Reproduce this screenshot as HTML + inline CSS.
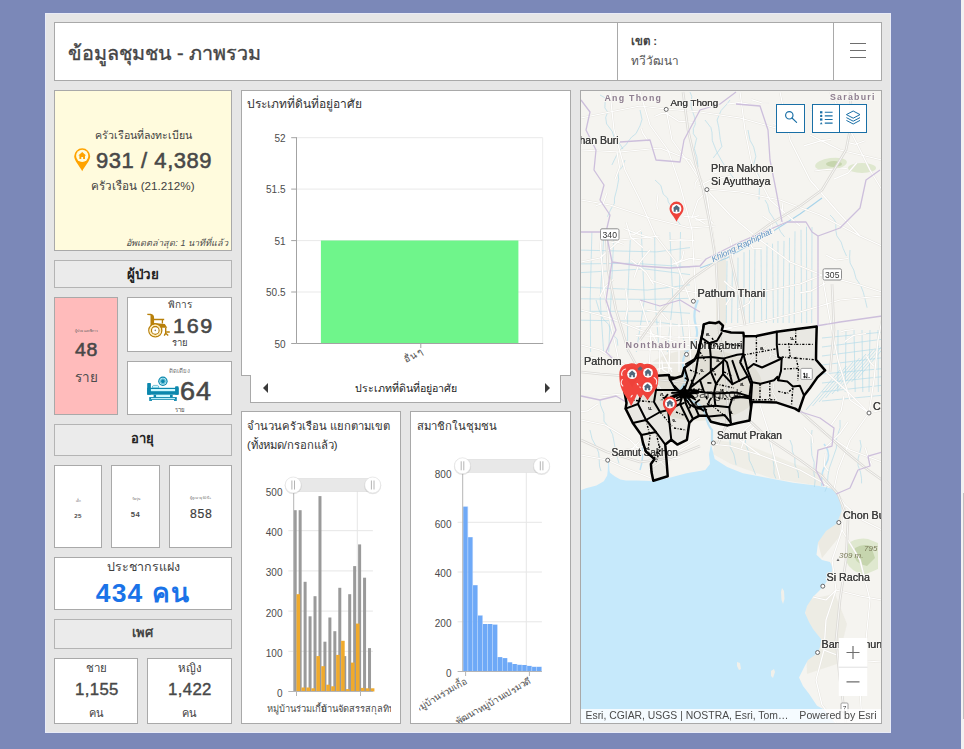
<!DOCTYPE html>
<html lang="th">
<head>
<meta charset="utf-8">
<title>ข้อมูลชุมชน - ภาพรวม</title>
<style>
*{box-sizing:border-box;margin:0;padding:0}
html,body{width:964px;height:749px;overflow:hidden}
body{background:#7b88b8;font-family:"Liberation Sans",sans-serif;color:#4c4c4c;position:relative}
#app{position:absolute;left:45px;top:13px;width:846px;height:720px;background:#e6e6e6;box-shadow:inset 0 0 0 1px rgba(232,236,252,.75)}
.p{position:absolute;background:#fff;border:1px solid #a9a9a9}
.hd{position:absolute;background:#ebebeb;border:1px solid #b4b4b4;text-align:center;font-weight:bold;color:#333;font-size:13px}
.c{text-align:center}
.abs{position:absolute}
.num{font-weight:bold;color:#4c4c4c}
.med{color:#484848;-webkit-text-stroke:.4px #484848;white-space:nowrap}
.big{color:#484848;-webkit-text-stroke:.55px #484848}
.ax{fill:#4c4c4c;font-family:"Liberation Sans",sans-serif}
svg{display:block;position:absolute;overflow:hidden}
</style>
</head>
<body>
<div id="app">

<!-- ===== header ===== -->
<div class="p" id="hdr" style="left:9px;top:9px;width:828px;height:59px">
  <div class="abs" style="left:12.500px;top:13.500px;font-size:19.8px;color:#444;-webkit-text-stroke:.35px #444;white-space:nowrap">ข้อมูลชุมชน - ภาพรวม</div>
  <div class="abs" style="left:562px;top:0;width:1px;height:57px;background:#a9a9a9"></div>
  <div class="abs" style="left:778px;top:0;width:1px;height:57px;background:#a9a9a9"></div>
  <div class="abs" style="left:576px;top:8.600px;font-size:11.5px;font-weight:bold;color:#444;white-space:nowrap">เขต :</div>
  <div class="abs" style="left:576px;top:27.600px;font-size:11.800px;color:#555;white-space:nowrap">ทวีวัฒนา</div>
  <div class="abs" style="left:794.500px;top:20.200px;width:16px;height:1.3px;background:#6e6e6e"></div>
  <div class="abs" style="left:794.500px;top:27.200px;width:16px;height:1.3px;background:#6e6e6e"></div>
  <div class="abs" style="left:794.500px;top:34px;width:16px;height:1.3px;background:#6e6e6e"></div>
</div>

<!-- ===== left column ===== -->
<div class="p" id="ind1" style="left:9px;top:77px;width:178px;height:161px;background:#fffbdd">
  <div class="abs c" style="left:0;top:36px;width:176px;font-size:10.6px;color:#3f3f3f;white-space:nowrap">ครัวเรือนที่ลงทะเบียน</div>
  <svg style="left:19px;top:57px" width="17" height="24" viewBox="0 0 17 24"><path d="M8.2.3a8 8 0 0 1 8 8c0 4.6-5.6 10-8 15-2.400-5-8-10.400-8-15a8 8 0 0 1 8-8z" fill="#ffa300"/><circle cx="8.200" cy="7.900" r="6.100" fill="#fffbdd"/><path d="M8.200 4l3.900 3.400h-1.100v3.700H9.100V8.900H7.300v2.200H5.400V7.400H4.300z" fill="#ffa300"/></svg>
  <div class="abs big" style="left:41px;top:57px;font-size:22px;letter-spacing:.55px;white-space:nowrap">931 / 4,389</div>
  <div class="abs c" style="left:0;top:86px;width:176px;font-size:11.7px;color:#3f3f3f;white-space:nowrap">ครัวเรือน (21.212%)</div>
  <div class="abs" style="right:3px;bottom:0px;font-size:9.100px;font-style:italic;color:#4c4c4c;white-space:nowrap">อัพเดตล่าสุด: 1 นาทีที่แล้ว</div>
</div>

<div class="hd" style="left:9px;top:247px;width:178px;height:28px"><div class="abs c" id="h1" style="left:-.3px;top:2.500px;width:176px;font-size:13.400px;color:#222">ผู้ป่วย</div></div>

<div class="p" id="pink" style="left:9px;top:284px;width:64px;height:118px;background:#ffbbbb">
  <div class="abs c" style="left:0;top:30px;width:63px;font-size:3.500px;color:#666;white-space:nowrap">ผู้ป่วย และพิการ</div>
  <div class="abs big" id="n48" style="left:20.300px;top:42.300px;font-size:18.200px;letter-spacing:.6px;transform-origin:0 0;transform:scaleX(1.07);white-space:nowrap">48</div>
  <div class="abs c" id="t_rai0" style="left:0px;top:68.200px;width:62px;font-size:13.500px;color:#4c4c4c">ราย</div>
</div>
<div class="p" id="dis" style="left:82px;top:284px;width:105px;height:55px">
  <div class="abs c" id="t_dis" style="left:0;top:-1px;width:103px;font-size:10px;color:#3f3f3f">พิการ</div>
  <svg style="left:16px;top:9.500px" width="32" height="32" viewBox="0 0 32 32">
    <g fill="#b8800a" stroke="none">
      <path d="M3.300 5.700H6.600Q10.100 6 10.100 10V17H6.500V7.200Q5.600 7.100 3.300 7.100Z"/>
      <path d="M10 15.100L20.800 15.900L23.300 19.800H16.800Q14.500 16.600 10 16.600Z"/>
    </g>
    <g fill="none" stroke="#b8800a" stroke-width="1.300">
      <path d="M10 11.500H20.200M18.400 11.500V15.600"/>
      <circle cx="11.300" cy="22.400" r="6.500"/>
      <circle cx="11.300" cy="22.400" r="3.900"/>
      <path d="M21.700 19.800V25.200L20.200 27.600M21.700 25.200L24.200 27.600M22.500 24H25.800" stroke-width="1.400"/>
    </g>
    <circle cx="11.300" cy="22.400" r="5.200" fill="none" stroke="#ffeab0" stroke-width="1.200"/>
    <circle cx="11.300" cy="22.400" r=".8" fill="#8a8270"/>
  </svg>
  <div class="abs big" id="n169" style="left:45px;top:17.200px;font-size:19.600px;letter-spacing:1.5px;transform-origin:0 0;transform:scaleX(1.1)">169</div>
  <div class="abs c" id="t_rai1" style="left:0;top:37px;width:103px;font-size:9.5px;color:#3f3f3f">ราย</div>
</div>
<div class="p" id="bed" style="left:82px;top:348px;width:105px;height:54px">
  <div class="abs c" id="t_bed" style="left:0;top:4px;width:103px;font-size:6.1px;color:#777">ติดเตียง</div>
  <svg style="left:16px;top:10px" width="40" height="34" viewBox="0 0 40 34">
    <g fill="#0b87ad">
      <rect x="3.200" y="11.100" width="3.700" height="11.600" rx=".6"/>
      <rect x="31.100" y="14.300" width="3.500" height="8.400" rx=".8"/>
      <rect x="3.200" y="15.800" width="31.400" height="6.900"/>
      <rect x="9.600" y="22.700" width="2.700" height="2.600"/>
      <rect x="26" y="22.700" width="2.700" height="2.600"/>
      <rect x="5.200" y="25.100" width="27.600" height="2.700"/>
      <rect x="5.200" y="27.600" width="2.800" height="1.300"/>
      <rect x="30" y="27.600" width="2.800" height="1.300"/>
      <circle cx="18.900" cy="9.300" r="4.700"/>
    </g>
    <g fill="#cdf8ff">
      <rect x="6.900" y="17" width="24.200" height="2.200"/>
      <rect x="12.300" y="23" width="13.700" height="2"/>
      <rect x="7" y="26" width="24" height=".9"/>
      <path d="M8.300 15.800Q8.300 13.400 9.600 13.400H13.600Q14.800 13.400 14.800 15.800Z" stroke="#0b87ad" stroke-width=".5"/>
      <circle cx="18.900" cy="9.300" r="3.500"/>
    </g>
    <circle cx="18.900" cy="9.300" r="2.700" fill="#0b87ad"/>
    <circle cx="18.900" cy="9.300" r="2.300" fill="none" stroke="#cdf8ff" stroke-width=".5"/>
  </svg>
  <div class="abs big" id="n64" style="left:52.4px;top:15px;font-size:25px;letter-spacing:.8px;transform-origin:0 0;transform:scaleX(1.08)">64</div>
  <div class="abs c" id="t_rai2" style="left:0;top:43px;width:103px;font-size:6px;color:#444">ราย</div>
</div>

<div class="hd" style="left:9px;top:411px;width:178px;height:32px"><div class="abs c" id="h2" style="left:-.5px;top:2.800px;width:176px;font-size:13px;color:#222">อายุ</div></div>

<div class="p" style="left:9px;top:452px;width:48px;height:83px">
  <div class="abs c" style="left:0;top:32.500px;width:46px;font-size:3px;color:#666">เด็ก</div>
  <div class="abs c num" id="n25" style="left:0;top:46.200px;width:46px;font-size:6.200px;letter-spacing:.3px">25</div>
</div>
<div class="p" style="left:66px;top:452px;width:49px;height:83px">
  <div class="abs c" style="left:0;top:30px;width:47px;font-size:3.400px;color:#666">วัยรุ่น</div>
  <div class="abs c num" id="n54" style="left:0;top:44px;width:47px;font-size:7.700px;letter-spacing:.5px">54</div>
</div>
<div class="p" style="left:124px;top:452px;width:63px;height:83px">
  <div class="abs c" style="left:0;top:29px;width:61px;font-size:3.300px;color:#666;white-space:nowrap">ผู้สูงอายุ 60 ปี+</div>
  <div class="abs" id="n858" style="left:20px;top:41.200px;font-size:12.200px;letter-spacing:.75px;color:#3c3c3c;-webkit-text-stroke:.2px #3c3c3c">858</div>
</div>

<div class="p" style="left:9px;top:544px;width:178px;height:53px">
  <div class="abs c" id="t_pop" style="left:0;top:-1px;width:176px;font-size:12.500px;color:#3f3f3f">ประชากรแฝง</div>
  <div class="abs c" id="n434" style="left:0;top:14.300px;width:176px;font-size:26.500px;font-weight:bold;color:#1a73e8;letter-spacing:1.150px;white-space:nowrap">434 คน</div>
</div>

<div class="hd" style="left:9px;top:606px;width:178px;height:30px"><div class="abs c" id="h3" style="left:-.8px;top:2px;width:176px;font-size:13px;color:#444">เพศ</div></div>

<div class="p" style="left:9px;top:645px;width:84px;height:66px">
  <div class="abs c" id="t_m" style="left:0;top:0px;width:82px;font-size:11.500px;color:#3f3f3f">ชาย</div>
  <div class="abs med" id="n1155" style="left:20px;top:21px;font-size:16.800px;letter-spacing:.35px">1,155</div>
  <div class="abs c" id="t_k1" style="left:0;top:44.500px;width:82px;font-size:11px;color:#3f3f3f">คน</div>
</div>
<div class="p" style="left:102px;top:645px;width:85px;height:66px">
  <div class="abs c" id="t_f" style="left:0;top:0px;width:83px;font-size:11.500px;color:#3f3f3f">หญิง</div>
  <div class="abs med" id="n1422" style="left:20px;top:21px;font-size:16.800px;letter-spacing:.35px">1,422</div>
  <div class="abs c" id="t_k2" style="left:0;top:44.500px;width:83px;font-size:11px;color:#3f3f3f">คน</div>
</div>

<!-- ===== middle column ===== -->
<div class="p" id="ch1" style="left:196px;top:77px;width:330px;height:286px">
  <div class="abs" id="t_c1" style="left:5px;top:3px;font-size:12px;color:#333;white-space:nowrap">ประเภทที่ดินที่อยู่อาศัย</div>
  <svg width="329" height="284" style="left:0;top:0"><g transform="translate(-242,-91)"><path d="M296.5 137.7H542.7" stroke="#e9e9e9" stroke-width="1"/><path d="M296.5 189.1H542.7" stroke="#e9e9e9" stroke-width="1"/><path d="M296.5 240.6H542.7" stroke="#e9e9e9" stroke-width="1"/><path d="M296.5 292.0H542.7" stroke="#e9e9e9" stroke-width="1"/><path d="M542.7 137.700V343.500" stroke="#ececec" stroke-width="1"/><rect x="320.900" y="240.500" width="197.500" height="103" fill="#6ff58b"/><path d="M296.500 137.200V343.500H543.200" fill="none" stroke="#a3a3a3" stroke-width="1"/><path d="M291.200 137.7H296.500" stroke="#a3a3a3" stroke-width="1"/><text class="ax" x="285.500" y="141.9" text-anchor="end" font-size="10">52</text><path d="M291.200 189.1H296.500" stroke="#a3a3a3" stroke-width="1"/><text class="ax" x="285.500" y="193.3" text-anchor="end" font-size="10">51.5</text><path d="M291.200 240.6H296.500" stroke="#a3a3a3" stroke-width="1"/><text class="ax" x="285.500" y="244.8" text-anchor="end" font-size="10">51</text><path d="M291.200 292.0H296.500" stroke="#a3a3a3" stroke-width="1"/><text class="ax" x="285.500" y="296.2" text-anchor="end" font-size="10">50.5</text><path d="M291.200 343.5H296.500" stroke="#a3a3a3" stroke-width="1"/><text class="ax" x="285.500" y="347.7" text-anchor="end" font-size="10">50</text><path d="M420.800 343.500V348" stroke="#a3a3a3" stroke-width="1"/><text class="ax" x="422" y="350.700" text-anchor="end" font-size="9.500" transform="rotate(-30 422 350.700)" dy="3">อื่น ๆ</text></g></svg>
</div>
<div class="p" id="tabs" style="left:205px;top:362px;width:311px;height:28px;border-top:none">
  <div class="abs" style="left:12px;top:8px;width:0;height:0;border:5px solid transparent;border-right:5.500px solid #3a3a3a;border-left:none"></div>
  <div class="abs c" id="t_tab" style="left:0;top:5px;width:309px;font-size:10.600px;color:#222;white-space:nowrap">ประเภทที่ดินที่อยู่อาศัย</div>
  <div class="abs" style="right:10px;top:8px;width:0;height:0;border:5px solid transparent;border-left:5.500px solid #3a3a3a;border-right:none"></div>
</div>
<div class="p" id="ch2" style="left:196px;top:398px;width:160px;height:313px;overflow:hidden">
  <div class="abs" id="t_c2" style="left:5px;top:5.200px;font-size:11.250px;line-height:18.800px;color:#333;white-space:nowrap">จำนวนครัวเรือน แยกตามเขต<br>(ทั้งหมด/กรอกแล้ว)</div>
  <svg width="159" height="311" style="left:0;top:0"><g transform="translate(-242,-412)"><path d="M288.300 651.3H372.900" stroke="#e6e6e6" stroke-width="1"/><path d="M288.300 611.1H372.900" stroke="#e6e6e6" stroke-width="1"/><path d="M288.300 570.9H372.900" stroke="#e6e6e6" stroke-width="1"/><path d="M288.300 530.7H372.900" stroke="#e6e6e6" stroke-width="1"/><path d="M357.300 490.600V691.500" stroke="#e6e6e6" stroke-width="1"/><rect x="293.70" y="510.2" width="3" height="181.3" fill="#9a9a9a"/><rect x="298.65" y="510.2" width="3" height="181.3" fill="#9a9a9a"/><rect x="303.61" y="581.8" width="3" height="109.7" fill="#9a9a9a"/><rect x="308.56" y="616.3" width="3" height="75.2" fill="#9a9a9a"/><rect x="313.52" y="596.2" width="3" height="95.3" fill="#9a9a9a"/><rect x="318.47" y="496.1" width="3" height="195.4" fill="#9a9a9a"/><rect x="323.43" y="641.7" width="3" height="49.8" fill="#9a9a9a"/><rect x="328.38" y="617.5" width="3" height="74.0" fill="#9a9a9a"/><rect x="333.34" y="631.2" width="3" height="60.3" fill="#9a9a9a"/><rect x="338.29" y="587.8" width="3" height="103.7" fill="#9a9a9a"/><rect x="343.25" y="656.1" width="3" height="35.4" fill="#9a9a9a"/><rect x="348.20" y="594.2" width="3" height="97.3" fill="#9a9a9a"/><rect x="353.16" y="566.1" width="3" height="125.4" fill="#9a9a9a"/><rect x="358.12" y="544.4" width="3" height="147.1" fill="#9a9a9a"/><rect x="363.07" y="577.7" width="3" height="113.8" fill="#9a9a9a"/><rect x="368.02" y="648.1" width="3" height="43.4" fill="#9a9a9a"/><rect x="296.50" y="594.2" width="3.600" height="97.3" fill="#f0aa2c"/><rect x="301.45" y="687.5" width="3.600" height="4.0" fill="#f0aa2c"/><rect x="306.41" y="687.5" width="3.600" height="4.0" fill="#f0aa2c"/><rect x="311.37" y="688.3" width="3.600" height="3.2" fill="#f0aa2c"/><rect x="316.32" y="656.1" width="3.600" height="35.4" fill="#f0aa2c"/><rect x="321.27" y="666.2" width="3.600" height="25.3" fill="#f0aa2c"/><rect x="326.23" y="684.7" width="3.600" height="6.8" fill="#f0aa2c"/><rect x="331.19" y="686.3" width="3.600" height="5.2" fill="#f0aa2c"/><rect x="336.14" y="654.9" width="3.600" height="36.6" fill="#f0aa2c"/><rect x="341.09" y="640.8" width="3.600" height="50.7" fill="#f0aa2c"/><rect x="346.05" y="689.1" width="3.600" height="2.4" fill="#f0aa2c"/><rect x="351.00" y="662.6" width="3.600" height="28.9" fill="#f0aa2c"/><rect x="355.96" y="623.6" width="3.600" height="67.9" fill="#f0aa2c"/><rect x="360.92" y="687.9" width="3.600" height="3.6" fill="#f0aa2c"/><rect x="365.87" y="688.3" width="3.600" height="3.2" fill="#f0aa2c"/><rect x="370.82" y="688.3" width="3.600" height="3.2" fill="#f0aa2c"/><path d="M293.700 490.600V691.500" stroke="#b5b5b5" stroke-width="1"/><path d="M288.300 691.500H372.900" stroke="#b5b5b5" stroke-width="1"/><path d="M296.500 691.500V696M360.500 691.500V696" stroke="#b5b5b5" stroke-width="1"/><text class="ax" x="282.500" y="696.9" text-anchor="end" font-size="10">0</text><text class="ax" x="282.500" y="656.7" text-anchor="end" font-size="10">100</text><text class="ax" x="282.500" y="616.5" text-anchor="end" font-size="10">200</text><text class="ax" x="282.500" y="576.3" text-anchor="end" font-size="10">300</text><text class="ax" x="282.500" y="536.1" text-anchor="end" font-size="10">400</text><text class="ax" x="282.500" y="495.9" text-anchor="end" font-size="10">500</text><rect x="293" y="478.500" width="80" height="13" fill="#e8e8e8" stroke="#dcdcdc" stroke-width=".6"/><circle cx="293.2" cy="485.6" r="8.6" fill="#000" opacity=".10"/><circle cx="293.2" cy="485" r="8" fill="#fff" stroke="#ddd" stroke-width=".6"/><path d="M291.9 480.5V489.5M294.5 480.5V489.5" stroke="#b4b4b4" stroke-width="1"/><circle cx="372.7" cy="485.6" r="8.6" fill="#000" opacity=".10"/><circle cx="372.7" cy="485" r="8" fill="#fff" stroke="#ddd" stroke-width=".6"/><path d="M371.4 480.5V489.5M374.0 480.5V489.5" stroke="#b4b4b4" stroke-width="1"/><svg x="243" y="696" width="148" height="27" viewBox="243 696 148 27"><text class="ax" x="296.500" y="711.900" id="xl1" text-anchor="middle" font-size="9.300">หมู่บ้านร่วมเกื้อ</text><text class="ax" x="360.500" y="711.900" id="xl2" text-anchor="middle" font-size="9.300">บ้านจัดสรรสกุลทิพย์</text></svg></g></svg>
</div>
<div class="p" id="ch3" style="left:365px;top:398px;width:161px;height:313px;overflow:hidden">
  <div class="abs" id="t_c3" style="left:5.500px;top:5.200px;font-size:11.350px;line-height:18.800px;color:#333;white-space:nowrap">สมาชิกในชุมชน</div>
  <svg width="160" height="311" style="left:0;top:0"><g transform="translate(-411,-412)"><path d="M457.600 621.8H541.900" stroke="#e6e6e6" stroke-width="1"/><path d="M457.600 572.0H541.900" stroke="#e6e6e6" stroke-width="1"/><path d="M457.600 522.3H541.900" stroke="#e6e6e6" stroke-width="1"/><path d="M526.300 472.500V671.500" stroke="#e6e6e6" stroke-width="1"/><rect x="463.20" y="506.6" width="4.500" height="164.9" fill="#6ea9f7"/><rect x="467.70" y="506.6" width=".42" height="164.9" fill="#a8cbfa"/><rect x="468.12" y="537.2" width="4.500" height="134.3" fill="#6ea9f7"/><rect x="472.62" y="537.2" width=".42" height="134.3" fill="#a8cbfa"/><rect x="473.04" y="585.2" width="4.500" height="86.3" fill="#6ea9f7"/><rect x="477.54" y="585.2" width=".42" height="86.3" fill="#a8cbfa"/><rect x="477.96" y="615.5" width="4.500" height="56.0" fill="#6ea9f7"/><rect x="482.46" y="615.5" width=".42" height="56.0" fill="#a8cbfa"/><rect x="482.88" y="624.0" width="4.500" height="47.5" fill="#6ea9f7"/><rect x="487.38" y="624.0" width=".42" height="47.5" fill="#a8cbfa"/><rect x="487.80" y="624.0" width="4.500" height="47.5" fill="#6ea9f7"/><rect x="492.30" y="624.0" width=".42" height="47.5" fill="#a8cbfa"/><rect x="492.72" y="624.6" width="4.500" height="46.9" fill="#6ea9f7"/><rect x="497.22" y="624.6" width=".42" height="46.9" fill="#a8cbfa"/><rect x="497.64" y="657.1" width="4.500" height="14.4" fill="#6ea9f7"/><rect x="502.14" y="657.1" width=".42" height="14.4" fill="#a8cbfa"/><rect x="502.56" y="658.1" width="4.500" height="13.4" fill="#6ea9f7"/><rect x="507.06" y="658.1" width=".42" height="13.4" fill="#a8cbfa"/><rect x="507.48" y="662.3" width="4.500" height="9.2" fill="#6ea9f7"/><rect x="511.98" y="662.3" width=".42" height="9.2" fill="#a8cbfa"/><rect x="512.40" y="664.0" width="4.500" height="7.5" fill="#6ea9f7"/><rect x="516.90" y="664.0" width=".42" height="7.5" fill="#a8cbfa"/><rect x="517.32" y="664.8" width="4.500" height="6.7" fill="#6ea9f7"/><rect x="521.82" y="664.8" width=".42" height="6.7" fill="#a8cbfa"/><rect x="522.24" y="665.0" width="4.500" height="6.5" fill="#6ea9f7"/><rect x="526.74" y="665.0" width=".42" height="6.5" fill="#a8cbfa"/><rect x="527.16" y="665.9" width="4.500" height="5.6" fill="#6ea9f7"/><rect x="531.66" y="665.9" width=".42" height="5.6" fill="#a8cbfa"/><rect x="532.08" y="666.8" width="4.500" height="4.7" fill="#6ea9f7"/><rect x="536.58" y="666.8" width=".42" height="4.7" fill="#a8cbfa"/><rect x="537.00" y="666.8" width="4.500" height="4.7" fill="#6ea9f7"/><rect x="541.50" y="666.8" width=".42" height="4.7" fill="#a8cbfa"/><path d="M462.700 472.500V671.500" stroke="#b5b5b5" stroke-width="1"/><path d="M457.600 671.500H541.900" stroke="#b5b5b5" stroke-width="1"/><path d="M465.600 671.500V676M529.400 671.500V676" stroke="#b5b5b5" stroke-width="1"/><text class="ax" x="451.500" y="676.9" text-anchor="end" font-size="10">0</text><text class="ax" x="451.500" y="627.2" text-anchor="end" font-size="10">200</text><text class="ax" x="451.500" y="577.4" text-anchor="end" font-size="10">400</text><text class="ax" x="451.500" y="527.7" text-anchor="end" font-size="10">600</text><text class="ax" x="451.500" y="477.9" text-anchor="end" font-size="10">800</text><rect x="462.500" y="459.300" width="79" height="13" fill="#e8e8e8" stroke="#dcdcdc" stroke-width=".6"/><circle cx="462.5" cy="466.40000000000003" r="8.6" fill="#000" opacity=".10"/><circle cx="462.5" cy="465.8" r="8" fill="#fff" stroke="#ddd" stroke-width=".6"/><path d="M461.2 461.3V470.3M463.8 461.3V470.3" stroke="#b4b4b4" stroke-width="1"/><circle cx="541.6" cy="466.40000000000003" r="8.6" fill="#000" opacity=".10"/><circle cx="541.6" cy="465.8" r="8" fill="#fff" stroke="#ddd" stroke-width=".6"/><path d="M540.3000000000001 461.3V470.3M542.9 461.3V470.3" stroke="#b4b4b4" stroke-width="1"/><svg x="419" y="672" width="152" height="51" viewBox="419 672 152 51"><text class="ax" x="466.800" y="680" text-anchor="end" font-size="9.300" transform="rotate(-30 466.800 680)" dy="3.2">หมู่บ้านร่วมเกื้อ</text><text class="ax" x="530" y="680" text-anchor="end" font-size="9.300" transform="rotate(-30 530 680)" dy="3.2">พัฒนาหมู่บ้านเปรมวดี</text></svg></g></svg>
</div>

<!-- ===== map ===== -->
<div class="p" id="map" style="left:535px;top:77px;width:302px;height:634px;background:#f5f4f0;overflow:hidden">
<svg width="300" height="632" style="left:0;top:0" viewBox="581 91 300 632" font-family="&quot;Liberation Sans&quot;,sans-serif">
<rect x="581" y="91" width="301" height="632" fill="#f5f4f0"/>
<g fill="#ebe9e0" opacity=".9">
<ellipse cx="700" cy="385" rx="62" ry="36"/>
<path d="M716 255h10v70h-10z"/>
<path d="M800 500l28-4 14 10-2 30-18 22-8-30z"/>
<path d="M805 600l30-6 12 30-10 40-30 10z" opacity=".8"/>
<path d="M715 440l30 4 50 20 30 10-4 12-50-8-40-14-18-10z" opacity=".7"/>
</g>
<g fill="#dfe8cf"><ellipse cx="831" cy="164" rx="16" ry="6" transform="rotate(-8 831 164)"/><ellipse cx="862" cy="168" rx="14" ry="5"/>
<path d="M846 545q10-8 22-6l10 4v26l-14 6q-14-4-18-14z"/></g>
<g fill="#c6d5ae"><ellipse cx="834" cy="164" rx="8" ry="3"/><path d="M855 548q8-5 16-2l4 12-8 8q-10-2-12-8z"/></g>
<path d="M580.0 490.5 L586.0 488.3 L596.4 485.4 L603.8 481.2 L607.2 475.4 L607.8 470.0 L608.0 462.0 L609.0 462.0 L609.4 470.0 L610.0 472.8 L615.0 476.6 L620.4 479.5 L626.0 480.4 L636.4 480.6 L652.0 481.0 L667.7 478.3 L686.5 473.3 L705.3 470.1 L710.0 463.9 L709.0 454.5 L711.0 444.0 L713.0 452.0 L714.7 459.0 L727.2 467.0 L742.9 473.3 L768.0 478.0 L793.0 482.7 L818.1 485.8 L833.8 489.0 L840.0 498.3 L841.6 510.9 L836.9 523.4 L826.0 531.0 L818.1 542.2 L816.5 554.7 L822.0 560.0 L830.0 562.0 L833.3 568.6 L829.0 578.0 L823.2 586.8 L813.0 596.9 L807.0 606.0 L805.0 613.0 L809.0 622.0 L813.0 629.0 L821.2 639.2 L820.0 647.0 L817.0 653.4 L808.0 660.0 L805.0 665.5 L799.0 677.6 L803.0 686.0 L809.0 693.7 L817.0 705.8 L825.0 709.9 L832.0 716.0 L838.0 724.0 L580.0 724.0Z" fill="#c6e9fb"/>
<g fill="#f1f0ea"><path d="M782 588l2 3 .5 8-1.500 5-1.500-4-.5-8z"/><path d="M737 662l3 1 1 6-2 1-2-4z"/><path d="M771 671l3-2 1 3-2 6-2-2z"/></g>
<g fill="none" stroke="#a3d5e8" stroke-width=".6" opacity=".9">
<path d="M727.0 260.9 L726.3 323.0"/>
<path d="M732.5 260.6 L731.6 323.0"/>
<path d="M738.0 257.6 L737.7 323.0"/>
<path d="M744.0 252.2 L744.0 323.0"/>
<path d="M749.5 249.8 L749.4 323.0"/>
<path d="M755.0 247.7 L754.2 323.0"/>
<path d="M761.0 247.3 L761.7 323.0"/>
<path d="M767.0 242.9 L766.4 323.0"/>
<path d="M772.5 243.7 L773.4 323.0"/>
<path d="M778.0 241.0 L777.8 323.0"/>
<path d="M784.0 240.9 L783.1 323.0"/>
<path d="M789.5 237.9 L789.1 323.0"/>
<path d="M795.0 231.3 L794.2 323.0"/>
<path d="M801.0 229.8 L801.6 323.0"/>
<path d="M806.5 226.7 L806.7 323.0"/>
<path d="M812.0 227.1 L811.7 323.0"/>
<path d="M806.0 410.0 L840.0 370.0"/>
<path d="M812.5 406.0 L846.5 366.0"/>
<path d="M819.0 402.0 L853.0 362.0"/>
<path d="M825.5 398.0 L859.5 358.0"/>
<path d="M832.0 394.0 L866.0 354.0"/>
<path d="M838.5 390.0 L872.5 350.0"/>
<path d="M845.0 386.0 L879.0 346.0"/>
<path d="M851.5 382.0 L885.5 342.0"/>
<path d="M858.0 378.0 L892.0 338.0"/>
<path d="M822.0 338.0 L882.0 332.2"/>
<path d="M822.0 347.0 L882.0 339.3"/>
<path d="M822.0 356.0 L882.0 348.2"/>
<path d="M822.0 365.0 L882.0 357.8"/>
<path d="M822.0 374.0 L882.0 368.7"/>
<path d="M822.0 383.0 L882.0 376.7"/>
<path d="M822.0 392.0 L882.0 385.3"/>
<path d="M822.0 401.0 L882.0 395.3"/>
<path d="M838.0 330.0 L837.8 392.0"/>
<path d="M846.0 330.0 L845.2 392.0"/>
<path d="M854.0 330.0 L855.2 392.0"/>
<path d="M862.0 330.0 L862.8 392.0"/>
<path d="M870.0 330.0 L869.0 392.0"/>
<path d="M878.0 330.0 L878.3 392.0"/>
<path d="M581.0 250.1 L656.3 251.9 L690.0 247.6"/>
<path d="M581.0 263.9 L633.5 263.3 L690.0 267.0"/>
<path d="M581.0 272.6 L644.7 268.9 L690.0 274.6"/>
<path d="M581.0 287.1 L647.2 290.1 L690.0 284.8"/>
<path d="M581.0 298.8 L647.8 299.4 L690.0 298.3"/>
<path d="M581.0 311.4 L658.3 311.2 L690.0 313.3"/>
<path d="M581.0 320.2 L651.0 321.4 L690.0 326.2"/>
<path d="M591.9 232.0 L590.2 300.0 L590.6 352.0"/>
<path d="M604.0 232.0 L600.2 300.0 L603.6 352.0"/>
<path d="M614.0 232.0 L610.9 300.0 L608.7 352.0"/>
<path d="M630.6 232.0 L627.6 300.0 L627.6 352.0"/>
<path d="M641.3 232.0 L644.3 300.0 L636.3 352.0"/>
<path d="M654.7 232.0 L655.1 300.0 L659.3 352.0"/>
<path d="M669.9 232.0 L672.8 300.0 L667.3 352.0"/>
<path d="M680.5 232.0 L679.4 300.0 L685.1 352.0"/>
<path d="M600.0 95.0 L605.7 98.2 L605.1 102.1 L604.9 107.9 L607.7 112.0 L605.7 117.4 L606.6 123.9 L612.3 131.5 L614.4 138.4 L617.8 140.8 L623.0 149.1"/>
<path d="M640.0 110.0 L642.0 119.4 L640.1 125.6 L636.0 133.6 L631.5 137.2 L628.1 141.5 L625.9 144.9 L620.9 149.1 L616.7 155.0 L611.9 165.0"/>
<path d="M690.0 92.0 L691.8 96.5 L691.1 102.5 L691.1 106.8 L694.6 117.3 L695.3 124.2 L693.4 128.4 L693.3 133.7 L696.6 138.4 L694.3 148.5 L695.5 153.1 L696.8 156.7 L698.0 167.1"/>
<path d="M705.0 120.0 L710.9 127.6 L712.0 132.5 L712.3 140.7 L715.6 148.9 L717.2 152.7 L722.7 162.6 L728.5 171.0 L734.1 178.9 L734.9 185.1"/>
<path d="M730.0 100.0 L726.8 104.2 L721.1 110.5 L717.1 120.0 L718.8 127.6 L720.3 139.5 L721.9 146.4 L717.7 152.2 L713.3 157.9"/>
<path d="M748.0 130.0 L750.0 140.2 L753.7 147.0 L755.9 156.4 L753.6 164.7 L757.9 174.0 L760.9 180.8 L759.3 190.1 L759.0 199.5"/>
<path d="M655.0 180.0 L660.8 185.4 L663.2 194.1 L667.6 198.1 L668.3 202.0 L673.8 209.8 L674.7 217.8 L680.5 224.7"/>
<path d="M625.0 160.0 L622.1 167.3 L617.9 171.4 L618.7 179.3 L616.9 188.9 L614.5 198.1 L614.4 203.4 L610.9 209.1 L607.4 216.7"/>
<path d="M765.0 200.0 L767.6 204.5 L769.3 212.0 L772.5 216.7 L777.0 224.1 L780.5 231.7 L784.5 236.8"/>
<path d="M830.0 215.0 L833.1 218.1 L835.8 222.2 L835.8 230.0 L836.8 235.8 L841.2 242.2 L843.1 248.3 L846.5 256.0"/>
<path d="M850.0 250.0 L849.6 257.4 L850.1 263.0 L853.8 270.1 L856.1 278.6 L860.6 285.3 L863.3 292.3 L865.4 300.5 L867.1 307.7"/>
<path d="M596.0 300.0 L598.9 309.6 L603.1 318.9 L608.7 324.5 L612.1 334.1 L617.1 338.9 L617.8 345.6"/>
<path d="M745.0 430.0 L745.3 436.0 L745.6 443.6 L748.7 452.2 L749.3 460.1 L752.0 465.7 L755.5 474.5"/>
<path d="M770.0 430.0 L769.9 438.8 L770.5 445.8 L773.4 454.1 L773.1 460.8 L774.1 467.2 L773.9 473.4 L775.8 478.5"/>
<path d="M790.0 440.0 L792.2 445.8 L792.3 451.1 L794.8 457.1 L795.0 465.1 L798.2 473.0 L798.6 478.0"/>
<path d="M812.0 430.0 L811.2 439.1 L811.2 445.6 L811.9 455.3 L814.2 462.3 L813.8 472.0 L815.1 480.8 L814.4 487.0"/>
<path d="M840.0 420.0 L840.1 427.6 L836.6 438.2 L836.4 448.0 L832.9 458.1 L829.3 468.3 L828.0 475.3 L827.3 485.9 L824.9 491.7"/>
<path d="M860.0 440.0 L861.2 446.4 L859.8 452.4 L858.1 458.6 L858.0 465.4 L860.5 472.2 L861.5 478.2 L861.6 483.4"/>
<path d="M600.0 400.0 L600.5 405.1 L603.9 413.4 L604.0 421.2 L608.6 426.9 L612.6 434.5 L614.5 444.5 L615.9 452.5 L619.0 463.4"/>
<path d="M590.0 430.0 L592.1 439.0 L596.3 446.8 L598.7 452.9 L599.1 457.7 L599.5 466.1 L601.0 471.1"/>
<path d="M730.0 440.0 L730.3 447.4 L733.8 454.0 L734.9 459.0 L736.1 464.9"/>
</g>
<path d="M700 268L727 258L775 230L800 214L822 198" fill="none" stroke="#a9d4ea" stroke-width="1.200"/>
<path d="M698 300q-6 14-2 26t-6 22q-10 10-6 22t-4 20q6 10 14 12t12 14q2 10 6 14l0 14" fill="none" stroke="#bfe3f5" stroke-width="2.200"/>
<path d="M640 470q4-12 2-26" fill="none" stroke="#bfe3f5" stroke-width="1.500"/>
<path d="M822 486q-2-12 4-22t-2-20" fill="none" stroke="#bfe3f5" stroke-width="1.600"/>
<g fill="none" stroke="#e6e4de" stroke-width="2.100" stroke-linejoin="round">
<path d="M581.0 118.0 L610.0 112.0 L640.0 106.0 L666.0 109.0 L700.0 112.0 L740.0 118.0 L776.0 128.0"/>
<path d="M581.0 150.0 L620.0 152.0 L660.0 148.0 L690.0 160.0 L706.0 189.0"/>
<path d="M610.0 92.0 L614.0 130.0 L625.0 170.0 L640.0 200.0 L655.0 235.0 L676.0 262.0 L690.0 300.0"/>
<path d="M640.0 92.0 L650.0 125.0 L668.0 150.0 L680.0 185.0 L692.0 230.0 L696.0 300.0"/>
<path d="M666.0 109.0 L672.0 140.0 L690.0 165.0 L706.0 189.0 L712.0 230.0 L716.0 260.0"/>
<path d="M706.0 189.0 L740.0 192.0 L780.0 200.0 L820.0 215.0 L860.0 236.0 L882.0 246.0"/>
<path d="M706.0 189.0 L730.0 215.0 L760.0 240.0 L790.0 262.0 L822.0 275.0 L860.0 285.0 L882.0 292.0"/>
<path d="M740.0 92.0 L745.0 130.0 L752.0 165.0 L770.0 200.0 L800.0 226.0"/>
<path d="M780.0 92.0 L790.0 140.0 L810.0 180.0 L836.0 210.0 L860.0 236.0"/>
<path d="M810.0 135.0 L840.0 150.0 L882.0 160.0"/>
<path d="M830.0 92.0 L850.0 130.0 L870.0 170.0 L882.0 190.0"/>
<path d="M581.0 200.0 L610.0 205.0 L650.0 218.0 L690.0 228.0 L716.0 226.0"/>
<path d="M581.0 262.0 L600.0 258.0 L620.0 240.0 L660.0 236.0"/>
<path d="M600.0 240.0 L604.0 290.0 L612.0 330.0 L620.0 366.0"/>
<path d="M581.0 310.0 L610.0 318.0 L640.0 330.0 L670.0 340.0 L690.0 346.0"/>
<path d="M581.0 345.0 L600.0 350.0 L625.0 365.0"/>
<path d="M640.0 300.0 L650.0 330.0 L662.0 352.0 L672.0 372.0"/>
<path d="M650.0 280.0 L680.0 290.0 L716.0 296.0 L760.0 292.0 L800.0 284.0 L822.0 275.0"/>
<path d="M716.0 330.0 L760.0 322.0 L800.0 312.0 L840.0 300.0 L882.0 296.0"/>
<path d="M822.0 275.0 L830.0 320.0 L838.0 360.0 L850.0 400.0 L869.0 413.0"/>
<path d="M869.0 413.0 L874.0 380.0 L878.0 340.0 L882.0 320.0"/>
<path d="M869.0 413.0 L850.0 440.0 L838.0 470.0 L834.0 489.0"/>
<path d="M826.0 372.0 L848.0 392.0 L869.0 413.0"/>
<path d="M800.0 411.0 L820.0 430.0 L850.0 450.0 L882.0 462.0"/>
<path d="M869.0 413.0 L882.0 410.0"/>
<path d="M581.0 396.0 L600.0 396.0 L622.0 394.0"/>
<path d="M581.0 420.0 L605.0 425.0 L630.0 440.0 L645.0 455.0"/>
<path d="M607.0 460.0 L625.0 450.0 L645.0 446.0"/>
<path d="M581.0 455.0 L607.0 460.0 L630.0 470.0 L651.0 478.0"/>
<path d="M711.0 444.0 L730.0 446.0 L760.0 455.0 L800.0 470.0 L834.0 489.0"/>
<path d="M725.0 426.0 L740.0 440.0 L760.0 455.0"/>
<path d="M760.0 405.0 L768.0 430.0 L775.0 460.0 L780.0 479.0"/>
<path d="M834.0 489.0 L845.0 505.0 L842.0 530.0 L832.0 560.0 L836.0 590.0 L826.0 620.0 L824.0 650.0 L816.0 680.0 L822.0 705.0 L836.0 723.0"/>
<path d="M845.0 505.0 L862.0 520.0 L882.0 530.0"/>
<path d="M842.0 530.0 L860.0 560.0 L870.0 600.0 L866.0 640.0 L860.0 690.0 L862.0 723.0"/>
<path d="M836.0 590.0 L860.0 596.0 L882.0 600.0"/>
<path d="M824.0 650.0 L850.0 660.0 L882.0 662.0"/>
<path d="M813.0 597.0 L826.0 600.0 L836.0 590.0"/>
<path d="M631.2 260.0 L646.2 272.5 L653.6 284.4"/>
<path d="M656.6 452.3 L658.2 459.5 L667.8 468.7"/>
<path d="M724.1 281.0 L729.4 286.0 L742.7 294.7"/>
<path d="M611.3 242.8 L615.9 241.5 L623.7 244.5"/>
<path d="M756.6 290.8 L748.9 303.2 L737.8 309.5"/>
<path d="M699.1 215.7 L693.3 217.2 L683.9 216.4"/>
<path d="M597.8 404.1 L587.5 410.9 L573.5 412.6"/>
<path d="M625.8 288.8 L628.0 306.6 L625.4 319.2"/>
<path d="M756.1 425.3 L746.6 433.0 L741.3 448.2"/>
<path d="M624.0 228.5 L638.8 234.4 L652.7 238.3"/>
<path d="M768.5 346.8 L771.1 354.9 L768.9 358.9"/>
<path d="M732.4 293.0 L731.0 296.9 L725.9 304.8"/>
<path d="M606.8 193.3 L603.3 203.3 L595.9 205.7"/>
<path d="M729.7 236.5 L732.8 251.0 L731.5 263.5"/>
<path d="M773.3 123.7 L783.1 126.0 L789.1 131.5"/>
<path d="M751.4 99.6 L761.5 102.8 L768.9 103.0"/>
<path d="M783.0 202.6 L782.1 210.7 L781.8 224.8"/>
<path d="M846.8 168.7 L826.7 169.5 L814.3 171.0"/>
<path d="M825.2 453.2 L824.3 465.6 L828.1 470.9"/>
<path d="M646.7 310.1 L661.0 312.3 L668.0 320.3"/>
<path d="M825.3 283.2 L810.3 291.2 L799.6 292.8"/>
<path d="M727.4 104.2 L738.5 102.7 L750.3 104.4"/>
<path d="M626.2 222.3 L630.6 237.0 L642.9 247.8"/>
<path d="M830.9 139.4 L820.6 140.9 L803.9 145.8"/>
<path d="M694.1 240.4 L680.5 239.8 L669.1 240.5"/>
<path d="M665.6 112.9 L678.3 121.1 L694.4 122.4"/>
<path d="M658.1 193.3 L656.8 205.1 L657.5 209.5"/>
<path d="M844.1 395.4 L841.2 410.5 L831.3 424.8"/>
<path d="M795.8 113.3 L790.5 122.6 L781.2 129.6"/>
<path d="M668.9 113.1 L661.4 113.6 L654.4 116.5"/>
<path d="M672.2 368.4 L664.7 367.5 L654.6 369.8"/>
<path d="M748.3 240.9 L752.7 248.1 L761.8 248.7"/>
<path d="M730.6 176.4 L714.0 178.4 L698.2 186.3"/>
<path d="M641.4 128.6 L642.6 132.8 L648.0 140.9"/>
<path d="M751.9 423.3 L743.8 430.9 L737.0 438.2"/>
<path d="M695.4 220.1 L708.0 218.9 L713.2 223.6"/>
<path d="M732.5 328.0 L723.1 329.4 L717.3 335.0"/>
<path d="M702.1 260.0 L689.9 258.4 L671.8 264.4"/>
<path d="M594.4 357.5 L584.5 357.1 L573.2 364.7"/>
<path d="M699.7 437.9 L690.3 443.9 L673.4 454.0"/>
<path d="M617.0 152.1 L619.5 167.4 L615.1 179.1"/>
<path d="M774.7 378.0 L772.6 392.2 L777.9 401.9"/>
<path d="M653.1 435.4 L646.0 441.8 L644.9 452.1"/>
<path d="M771.4 353.5 L778.0 356.5 L784.1 358.1"/>
<path d="M698.7 177.7 L695.2 183.2 L694.9 189.3"/>
<path d="M866.0 333.5 L853.4 335.5 L845.0 341.5"/>
<path d="M866.5 355.7 L870.0 362.2 L873.6 366.0"/>
<path d="M708.1 190.2 L697.8 200.4 L691.8 218.2"/>
<path d="M684.0 250.6 L682.0 259.4 L675.2 264.3"/>
<path d="M732.9 170.9 L726.1 169.7 L714.2 172.7"/>
<path d="M649.9 376.4 L659.7 387.0 L669.7 402.7"/>
<path d="M650.4 249.3 L639.4 262.7 L634.1 277.8"/>
<path d="M647.4 455.4 L649.8 457.4 L659.3 461.1"/>
<path d="M848.2 421.9 L840.3 433.2 L825.5 447.2"/>
<path d="M639.4 441.3 L636.2 444.8 L630.5 450.4"/>
<path d="M694.5 217.7 L698.0 219.6 L704.9 223.8"/>
<path d="M865.0 140.8 L855.6 144.3 L848.5 142.6"/>
<path d="M825.8 255.0 L835.9 260.1 L848.0 258.5"/>
<path d="M641.6 229.8 L634.8 234.3 L629.5 233.8"/>
<path d="M809.6 110.0 L819.6 108.8 L822.9 111.5"/>
<path d="M804.0 427.5 L812.0 436.3 L812.7 443.2"/>
<path d="M661.8 360.2 L662.8 369.8 L671.7 375.3"/>
<path d="M853.5 329.6 L845.2 330.5 L841.2 331.8"/>
<path d="M865.3 447.9 L867.8 456.1 L871.5 464.4"/>
<path d="M856.9 162.7 L848.0 173.1 L833.9 179.1"/>
<path d="M762.9 216.3 L770.5 221.3 L773.6 233.1"/>
<path d="M642.8 373.6 L643.9 378.7 L652.4 383.0"/>
<path d="M680.4 457.7 L662.8 460.4 L649.0 469.8"/>
<path d="M613.3 279.4 L604.4 287.4 L599.9 296.7"/>
<path d="M766.8 344.4 L757.3 352.3 L745.2 366.2"/>
<path d="M651.4 320.0 L649.2 372.0"/>
<path d="M660.3 320.0 L659.5 372.0"/>
<path d="M671.0 320.0 L668.8 372.0"/>
<path d="M679.0 320.0 L679.0 372.0"/>
<path d="M688.6 320.0 L691.5 372.0"/>
<path d="M636.0 326.3 L700.0 325.3"/>
<path d="M636.0 335.6 L700.0 338.0"/>
<path d="M636.0 350.0 L700.0 348.9"/>
<path d="M636.0 363.2 L700.0 362.6"/>
</g>
<g fill="none" stroke="#fff" stroke-width="1.200" stroke-linejoin="round">
<path d="M581.0 118.0 L610.0 112.0 L640.0 106.0 L666.0 109.0 L700.0 112.0 L740.0 118.0 L776.0 128.0"/>
<path d="M581.0 150.0 L620.0 152.0 L660.0 148.0 L690.0 160.0 L706.0 189.0"/>
<path d="M610.0 92.0 L614.0 130.0 L625.0 170.0 L640.0 200.0 L655.0 235.0 L676.0 262.0 L690.0 300.0"/>
<path d="M640.0 92.0 L650.0 125.0 L668.0 150.0 L680.0 185.0 L692.0 230.0 L696.0 300.0"/>
<path d="M666.0 109.0 L672.0 140.0 L690.0 165.0 L706.0 189.0 L712.0 230.0 L716.0 260.0"/>
<path d="M706.0 189.0 L740.0 192.0 L780.0 200.0 L820.0 215.0 L860.0 236.0 L882.0 246.0"/>
<path d="M706.0 189.0 L730.0 215.0 L760.0 240.0 L790.0 262.0 L822.0 275.0 L860.0 285.0 L882.0 292.0"/>
<path d="M740.0 92.0 L745.0 130.0 L752.0 165.0 L770.0 200.0 L800.0 226.0"/>
<path d="M780.0 92.0 L790.0 140.0 L810.0 180.0 L836.0 210.0 L860.0 236.0"/>
<path d="M810.0 135.0 L840.0 150.0 L882.0 160.0"/>
<path d="M830.0 92.0 L850.0 130.0 L870.0 170.0 L882.0 190.0"/>
<path d="M581.0 200.0 L610.0 205.0 L650.0 218.0 L690.0 228.0 L716.0 226.0"/>
<path d="M581.0 262.0 L600.0 258.0 L620.0 240.0 L660.0 236.0"/>
<path d="M600.0 240.0 L604.0 290.0 L612.0 330.0 L620.0 366.0"/>
<path d="M581.0 310.0 L610.0 318.0 L640.0 330.0 L670.0 340.0 L690.0 346.0"/>
<path d="M581.0 345.0 L600.0 350.0 L625.0 365.0"/>
<path d="M640.0 300.0 L650.0 330.0 L662.0 352.0 L672.0 372.0"/>
<path d="M650.0 280.0 L680.0 290.0 L716.0 296.0 L760.0 292.0 L800.0 284.0 L822.0 275.0"/>
<path d="M716.0 330.0 L760.0 322.0 L800.0 312.0 L840.0 300.0 L882.0 296.0"/>
<path d="M822.0 275.0 L830.0 320.0 L838.0 360.0 L850.0 400.0 L869.0 413.0"/>
<path d="M869.0 413.0 L874.0 380.0 L878.0 340.0 L882.0 320.0"/>
<path d="M869.0 413.0 L850.0 440.0 L838.0 470.0 L834.0 489.0"/>
<path d="M826.0 372.0 L848.0 392.0 L869.0 413.0"/>
<path d="M800.0 411.0 L820.0 430.0 L850.0 450.0 L882.0 462.0"/>
<path d="M869.0 413.0 L882.0 410.0"/>
<path d="M581.0 396.0 L600.0 396.0 L622.0 394.0"/>
<path d="M581.0 420.0 L605.0 425.0 L630.0 440.0 L645.0 455.0"/>
<path d="M607.0 460.0 L625.0 450.0 L645.0 446.0"/>
<path d="M581.0 455.0 L607.0 460.0 L630.0 470.0 L651.0 478.0"/>
<path d="M711.0 444.0 L730.0 446.0 L760.0 455.0 L800.0 470.0 L834.0 489.0"/>
<path d="M725.0 426.0 L740.0 440.0 L760.0 455.0"/>
<path d="M760.0 405.0 L768.0 430.0 L775.0 460.0 L780.0 479.0"/>
<path d="M834.0 489.0 L845.0 505.0 L842.0 530.0 L832.0 560.0 L836.0 590.0 L826.0 620.0 L824.0 650.0 L816.0 680.0 L822.0 705.0 L836.0 723.0"/>
<path d="M845.0 505.0 L862.0 520.0 L882.0 530.0"/>
<path d="M842.0 530.0 L860.0 560.0 L870.0 600.0 L866.0 640.0 L860.0 690.0 L862.0 723.0"/>
<path d="M836.0 590.0 L860.0 596.0 L882.0 600.0"/>
<path d="M824.0 650.0 L850.0 660.0 L882.0 662.0"/>
<path d="M813.0 597.0 L826.0 600.0 L836.0 590.0"/>
<path d="M631.2 260.0 L646.2 272.5 L653.6 284.4"/>
<path d="M656.6 452.3 L658.2 459.5 L667.8 468.7"/>
<path d="M724.1 281.0 L729.4 286.0 L742.7 294.7"/>
<path d="M611.3 242.8 L615.9 241.5 L623.7 244.5"/>
<path d="M756.6 290.8 L748.9 303.2 L737.8 309.5"/>
<path d="M699.1 215.7 L693.3 217.2 L683.9 216.4"/>
<path d="M597.8 404.1 L587.5 410.9 L573.5 412.6"/>
<path d="M625.8 288.8 L628.0 306.6 L625.4 319.2"/>
<path d="M756.1 425.3 L746.6 433.0 L741.3 448.2"/>
<path d="M624.0 228.5 L638.8 234.4 L652.7 238.3"/>
<path d="M768.5 346.8 L771.1 354.9 L768.9 358.9"/>
<path d="M732.4 293.0 L731.0 296.9 L725.9 304.8"/>
<path d="M606.8 193.3 L603.3 203.3 L595.9 205.7"/>
<path d="M729.7 236.5 L732.8 251.0 L731.5 263.5"/>
<path d="M773.3 123.7 L783.1 126.0 L789.1 131.5"/>
<path d="M751.4 99.6 L761.5 102.8 L768.9 103.0"/>
<path d="M783.0 202.6 L782.1 210.7 L781.8 224.8"/>
<path d="M846.8 168.7 L826.7 169.5 L814.3 171.0"/>
<path d="M825.2 453.2 L824.3 465.6 L828.1 470.9"/>
<path d="M646.7 310.1 L661.0 312.3 L668.0 320.3"/>
<path d="M825.3 283.2 L810.3 291.2 L799.6 292.8"/>
<path d="M727.4 104.2 L738.5 102.7 L750.3 104.4"/>
<path d="M626.2 222.3 L630.6 237.0 L642.9 247.8"/>
<path d="M830.9 139.4 L820.6 140.9 L803.9 145.8"/>
<path d="M694.1 240.4 L680.5 239.8 L669.1 240.5"/>
<path d="M665.6 112.9 L678.3 121.1 L694.4 122.4"/>
<path d="M658.1 193.3 L656.8 205.1 L657.5 209.5"/>
<path d="M844.1 395.4 L841.2 410.5 L831.3 424.8"/>
<path d="M795.8 113.3 L790.5 122.6 L781.2 129.6"/>
<path d="M668.9 113.1 L661.4 113.6 L654.4 116.5"/>
<path d="M672.2 368.4 L664.7 367.5 L654.6 369.8"/>
<path d="M748.3 240.9 L752.7 248.1 L761.8 248.7"/>
<path d="M730.6 176.4 L714.0 178.4 L698.2 186.3"/>
<path d="M641.4 128.6 L642.6 132.8 L648.0 140.9"/>
<path d="M751.9 423.3 L743.8 430.9 L737.0 438.2"/>
<path d="M695.4 220.1 L708.0 218.9 L713.2 223.6"/>
<path d="M732.5 328.0 L723.1 329.4 L717.3 335.0"/>
<path d="M702.1 260.0 L689.9 258.4 L671.8 264.4"/>
<path d="M594.4 357.5 L584.5 357.1 L573.2 364.7"/>
<path d="M699.7 437.9 L690.3 443.9 L673.4 454.0"/>
<path d="M617.0 152.1 L619.5 167.4 L615.1 179.1"/>
<path d="M774.7 378.0 L772.6 392.2 L777.9 401.9"/>
<path d="M653.1 435.4 L646.0 441.8 L644.9 452.1"/>
<path d="M771.4 353.5 L778.0 356.5 L784.1 358.1"/>
<path d="M698.7 177.7 L695.2 183.2 L694.9 189.3"/>
<path d="M866.0 333.5 L853.4 335.5 L845.0 341.5"/>
<path d="M866.5 355.7 L870.0 362.2 L873.6 366.0"/>
<path d="M708.1 190.2 L697.8 200.4 L691.8 218.2"/>
<path d="M684.0 250.6 L682.0 259.4 L675.2 264.3"/>
<path d="M732.9 170.9 L726.1 169.7 L714.2 172.7"/>
<path d="M649.9 376.4 L659.7 387.0 L669.7 402.7"/>
<path d="M650.4 249.3 L639.4 262.7 L634.1 277.8"/>
<path d="M647.4 455.4 L649.8 457.4 L659.3 461.1"/>
<path d="M848.2 421.9 L840.3 433.2 L825.5 447.2"/>
<path d="M639.4 441.3 L636.2 444.8 L630.5 450.4"/>
<path d="M694.5 217.7 L698.0 219.6 L704.9 223.8"/>
<path d="M865.0 140.8 L855.6 144.3 L848.5 142.6"/>
<path d="M825.8 255.0 L835.9 260.1 L848.0 258.5"/>
<path d="M641.6 229.8 L634.8 234.3 L629.5 233.8"/>
<path d="M809.6 110.0 L819.6 108.8 L822.9 111.5"/>
<path d="M804.0 427.5 L812.0 436.3 L812.7 443.2"/>
<path d="M661.8 360.2 L662.8 369.8 L671.7 375.3"/>
<path d="M853.5 329.6 L845.2 330.5 L841.2 331.8"/>
<path d="M865.3 447.9 L867.8 456.1 L871.5 464.4"/>
<path d="M856.9 162.7 L848.0 173.1 L833.9 179.1"/>
<path d="M762.9 216.3 L770.5 221.3 L773.6 233.1"/>
<path d="M642.8 373.6 L643.9 378.7 L652.4 383.0"/>
<path d="M680.4 457.7 L662.8 460.4 L649.0 469.8"/>
<path d="M613.3 279.4 L604.4 287.4 L599.9 296.7"/>
<path d="M766.8 344.4 L757.3 352.3 L745.2 366.2"/>
<path d="M651.4 320.0 L649.2 372.0"/>
<path d="M660.3 320.0 L659.5 372.0"/>
<path d="M671.0 320.0 L668.8 372.0"/>
<path d="M679.0 320.0 L679.0 372.0"/>
<path d="M688.6 320.0 L691.5 372.0"/>
<path d="M636.0 326.3 L700.0 325.3"/>
<path d="M636.0 335.6 L700.0 338.0"/>
<path d="M636.0 350.0 L700.0 348.9"/>
<path d="M636.0 363.2 L700.0 362.6"/>
</g>
<g fill="none" stroke-linejoin="round">
<path d="M683.0 92.0 L688.0 130.0 L696.0 165.0 L703.0 189.0 L710.0 225.0 L716.0 262.0 L718.0 300.0 L719.0 330.0" stroke="#dcdad6" stroke-width="2.600"/>
<path d="M716.0 262.0 L740.0 246.0 L770.0 224.0 L800.0 206.0 L822.0 190.0 L846.0 150.0 L852.0 120.0 L850.0 92.0" stroke="#dcdad6" stroke-width="2.600"/>
<path d="M640.0 340.0 L660.0 312.0 L690.0 280.0 L716.0 262.0" stroke="#dcdad6" stroke-width="2.600"/>
<path d="M606.0 232.0 L608.0 270.0 L616.0 310.0 L628.0 350.0 L640.0 372.0" stroke="#dcdad6" stroke-width="2.600"/>
<path d="M730.0 255.0 L738.0 290.0 L745.0 325.0" stroke="#dcdad6" stroke-width="2.600"/>
<path d="M581.0 372.0 L600.0 374.0 L625.0 376.0 L660.0 380.0 L700.0 384.0" stroke="#dcdad6" stroke-width="2.600"/>
<path d="M581.0 440.0 L607.0 452.0 L640.0 462.0 L670.0 458.0 L700.0 446.0" stroke="#dcdad6" stroke-width="2.600"/>
<path d="M719.0 330.0 L724.0 360.0 L728.0 392.0 L726.0 426.0 L718.0 444.0" stroke="#dcdad6" stroke-width="2.600"/>
<path d="M749.0 420.0 L770.0 440.0 L800.0 460.0 L822.0 476.0 L838.0 494.0 L848.0 520.0 L846.0 560.0 L840.0 600.0 L836.0 640.0 L840.0 680.0 L846.0 723.0" stroke="#dcdad6" stroke-width="2.600"/>
<path d="M800.0 411.0 L824.0 432.0 L846.0 452.0 L868.0 470.0 L882.0 480.0" stroke="#dcdad6" stroke-width="2.600"/>
<path d="M832.0 284.0 L834.0 330.0 L830.0 372.0" stroke="#dcdad6" stroke-width="2.600"/>
<path d="M683.0 92.0 L688.0 130.0 L696.0 165.0 L703.0 189.0 L710.0 225.0 L716.0 262.0 L718.0 300.0 L719.0 330.0" stroke="#f8f8f6" stroke-width="1"/>
<path d="M716.0 262.0 L740.0 246.0 L770.0 224.0 L800.0 206.0 L822.0 190.0 L846.0 150.0 L852.0 120.0 L850.0 92.0" stroke="#f8f8f6" stroke-width="1"/>
<path d="M640.0 340.0 L660.0 312.0 L690.0 280.0 L716.0 262.0" stroke="#f8f8f6" stroke-width="1"/>
<path d="M606.0 232.0 L608.0 270.0 L616.0 310.0 L628.0 350.0 L640.0 372.0" stroke="#f8f8f6" stroke-width="1"/>
<path d="M730.0 255.0 L738.0 290.0 L745.0 325.0" stroke="#f8f8f6" stroke-width="1"/>
<path d="M581.0 372.0 L600.0 374.0 L625.0 376.0 L660.0 380.0 L700.0 384.0" stroke="#f8f8f6" stroke-width="1"/>
<path d="M581.0 440.0 L607.0 452.0 L640.0 462.0 L670.0 458.0 L700.0 446.0" stroke="#f8f8f6" stroke-width="1"/>
<path d="M719.0 330.0 L724.0 360.0 L728.0 392.0 L726.0 426.0 L718.0 444.0" stroke="#f8f8f6" stroke-width="1"/>
<path d="M749.0 420.0 L770.0 440.0 L800.0 460.0 L822.0 476.0 L838.0 494.0 L848.0 520.0 L846.0 560.0 L840.0 600.0 L836.0 640.0 L840.0 680.0 L846.0 723.0" stroke="#f8f8f6" stroke-width="1"/>
<path d="M800.0 411.0 L824.0 432.0 L846.0 452.0 L868.0 470.0 L882.0 480.0" stroke="#f8f8f6" stroke-width="1"/>
<path d="M832.0 284.0 L834.0 330.0 L830.0 372.0" stroke="#f8f8f6" stroke-width="1"/>
</g>
<g fill="none" stroke="#cdbfdc" stroke-width="1.300" stroke-linejoin="round">
<path d="M581.0 100.0 L590.0 112.0 L586.0 130.0 L596.0 150.0 L594.0 170.0 L604.0 185.0 L600.0 200.0 L610.0 215.0 L606.0 232.0"/>
<path d="M581.0 232.0 L606.0 232.0 L612.0 262.0 L640.0 266.0 L670.0 268.0 L700.0 266.0 L706.0 259.0 L740.0 242.0 L787.0 222.0 L806.0 222.0 L812.0 232.0 L818.0 236.0 L818.0 323.0 L818.0 326.0"/>
<path d="M620.0 142.0 L650.0 140.0 L656.0 160.0 L680.0 162.0 L684.0 140.0 L700.0 110.0 L720.0 104.0 L736.0 92.0"/>
<path d="M736.0 104.0 L760.0 106.0 L768.0 130.0 L770.0 160.0 L776.0 190.0 L782.0 222.0"/>
<path d="M818.0 236.0 L840.0 228.0 L860.0 208.0 L866.0 180.0 L880.0 170.0"/>
<path d="M612.0 262.0 L606.0 300.0 L616.0 330.0 L606.0 352.0 L620.0 366.0"/>
<path d="M581.0 396.0 L600.0 400.0 L616.0 396.0 L626.0 402.0"/>
<path d="M816.0 326.0 L840.0 322.0 L882.0 316.0"/>
<path d="M798.0 411.0 L820.0 418.0 L834.0 428.0 L832.0 446.0 L818.0 450.0 L816.0 470.0 L824.0 486.0"/>
<path d="M836.0 494.0 L850.0 488.0 L858.0 470.0 L870.0 466.0 L868.0 456.0 L882.0 452.0"/>
<path d="M640.0 300.0 L660.0 306.0 L680.0 300.0 L700.0 312.0"/>
</g>

<text x="604.5" y="101" font-size="8.8" fill="#8e7e90" text-anchor="start" stroke="#f7f6f2" stroke-width="2.200" paint-order="stroke" letter-spacing="1.250" font-weight="bold">Ang Thong</text>
<text x="830" y="100.3" font-size="8.8" fill="#8e7e90" text-anchor="start" stroke="#f7f6f2" stroke-width="2.200" paint-order="stroke" letter-spacing="1.250" font-weight="bold">Saraburi</text>
<text x="625.5" y="348" font-size="9" fill="#8e7e90" text-anchor="start" stroke="#f7f6f2" stroke-width="2.200" paint-order="stroke" letter-spacing="1.350" font-weight="bold">Nonthaburi</text>
<text x="670.5" y="106.3" font-size="9.78" fill="#3f3f3f" text-anchor="start" stroke="#f7f6f2" stroke-width="2.200" paint-order="stroke" >Ang Thong</text>
<text x="670.5" y="106.3" font-size="9.78" fill="#3f3f3f" text-anchor="start" stroke="#3f3f3f" stroke-width=".12" >Ang Thong</text>
<circle cx="666.2" cy="109.4" r="2" fill="#fff" stroke="#666" stroke-width="1"/>
<text x="579.5" y="144" font-size="10.53" fill="#3f3f3f" text-anchor="start" stroke="#f7f6f2" stroke-width="2.200" paint-order="stroke" >han Buri</text>
<text x="579.5" y="144" font-size="10.53" fill="#3f3f3f" text-anchor="start" stroke="#3f3f3f" stroke-width=".12" >han Buri</text>
<text x="711" y="171.7" font-size="10.72" fill="#3f3f3f" text-anchor="start" stroke="#f7f6f2" stroke-width="2.200" paint-order="stroke" >Phra Nakhon</text>
<text x="711" y="171.7" font-size="10.72" fill="#3f3f3f" text-anchor="start" stroke="#3f3f3f" stroke-width=".12" >Phra Nakhon</text>
<text x="711" y="184.9" font-size="10.72" fill="#3f3f3f" text-anchor="start" stroke="#f7f6f2" stroke-width="2.200" paint-order="stroke" >Si Ayutthaya</text>
<text x="711" y="184.9" font-size="10.72" fill="#3f3f3f" text-anchor="start" stroke="#3f3f3f" stroke-width=".12" >Si Ayutthaya</text>
<circle cx="706.9" cy="189.6" r="2" fill="#fff" stroke="#666" stroke-width="1"/>
<text x="697.5" y="297.3" font-size="10.9" fill="#3f3f3f" text-anchor="start" stroke="#f7f6f2" stroke-width="2.200" paint-order="stroke" >Pathum Thani</text>
<text x="697.5" y="297.3" font-size="10.9" fill="#3f3f3f" text-anchor="start" stroke="#3f3f3f" stroke-width=".12" >Pathum Thani</text>
<circle cx="693.4" cy="301.2" r="2" fill="#fff" stroke="#666" stroke-width="1"/>
<text x="584" y="364.8" font-size="10.9" fill="#3f3f3f" text-anchor="start" stroke="#f7f6f2" stroke-width="2.200" paint-order="stroke" >Pathom</text>
<text x="584" y="364.8" font-size="10.9" fill="#3f3f3f" text-anchor="start" stroke="#3f3f3f" stroke-width=".12" >Pathom</text>
<text x="690" y="397.500" font-size="13.500" fill="#555">Bangkok</text>
<text x="690" y="349" font-size="10.72" fill="#3f3f3f" text-anchor="start" stroke="#f7f6f2" stroke-width="2.200" paint-order="stroke" >Nonthaburi</text>
<text x="690" y="349" font-size="10.72" fill="#3f3f3f" text-anchor="start" stroke="#3f3f3f" stroke-width=".12" >Nonthaburi</text>
<circle cx="686.5" cy="354.4" r="2" fill="#fff" stroke="#666" stroke-width="1"/>
<text x="611.5" y="456.3" font-size="10.15" fill="#3f3f3f" text-anchor="start" stroke="#f7f6f2" stroke-width="2.200" paint-order="stroke" >Samut Sakhon</text>
<text x="611.5" y="456.3" font-size="10.15" fill="#3f3f3f" text-anchor="start" stroke="#3f3f3f" stroke-width=".12" >Samut Sakhon</text>
<circle cx="607.7" cy="460.2" r="2" fill="#fff" stroke="#666" stroke-width="1"/>
<text x="717" y="439" font-size="10.25" fill="#3f3f3f" text-anchor="start" stroke="#f7f6f2" stroke-width="2.200" paint-order="stroke" >Samut Prakan</text>
<text x="717" y="439" font-size="10.25" fill="#3f3f3f" text-anchor="start" stroke="#3f3f3f" stroke-width=".12" >Samut Prakan</text>
<circle cx="713.4" cy="443" r="2" fill="#fff" stroke="#666" stroke-width="1"/>
<text x="873" y="409.6" font-size="10.72" fill="#3f3f3f" text-anchor="start" stroke="#f7f6f2" stroke-width="2.200" paint-order="stroke" >Ch</text>
<text x="873" y="409.6" font-size="10.72" fill="#3f3f3f" text-anchor="start" stroke="#3f3f3f" stroke-width=".12" >Ch</text>
<circle cx="869" cy="413" r="2" fill="#fff" stroke="#666" stroke-width="1"/>
<text x="843" y="518.6" font-size="10.72" fill="#3f3f3f" text-anchor="start" stroke="#f7f6f2" stroke-width="2.200" paint-order="stroke" >Chon Bu</text>
<text x="843" y="518.6" font-size="10.72" fill="#3f3f3f" text-anchor="start" stroke="#3f3f3f" stroke-width=".12" >Chon Bu</text>
<circle cx="838.8" cy="522.5" r="2" fill="#fff" stroke="#666" stroke-width="1"/>
<text x="826.5" y="581.4" font-size="10.72" fill="#3f3f3f" text-anchor="start" stroke="#f7f6f2" stroke-width="2.200" paint-order="stroke" >Si Racha</text>
<text x="826.5" y="581.4" font-size="10.72" fill="#3f3f3f" text-anchor="start" stroke="#3f3f3f" stroke-width=".12" >Si Racha</text>
<circle cx="822.8" cy="586.2" r="2" fill="#fff" stroke="#666" stroke-width="1"/>
<text x="821.5" y="648" font-size="10.72" fill="#3f3f3f" text-anchor="start" stroke="#f7f6f2" stroke-width="2.200" paint-order="stroke" >Bang Lamung</text>
<text x="821.5" y="648" font-size="10.72" fill="#3f3f3f" text-anchor="start" stroke="#3f3f3f" stroke-width=".12" >Bang Lamung</text>
<circle cx="817.6" cy="652.5" r="2" fill="#fff" stroke="#666" stroke-width="1"/>
<text x="713" y="262" font-size="8.300" font-style="italic" fill="#5f93c4" transform="rotate(-26 713.500 261.500)" stroke="#f7f6f2" stroke-width="1.500" paint-order="stroke">Khlong Raphiphat</text>
<text x="839" y="558" font-size="8" font-style="italic" fill="#7a7a5a">309 m.</text><text x="864" y="551" font-size="8" font-style="italic" fill="#7a7a5a">795</text><path d="M836.500 561l1.500-2.500 1.500 2.500z" fill="#666"/>
<rect x="600.5" y="228.8" width="18.500" height="11.200" rx="1.500" fill="#fff" stroke="#8e8e8e" stroke-width="1"/><text x="609.75" y="237.70000000000002" font-size="8.600" fill="#333" text-anchor="middle">340</text>
<rect x="823" y="268.8" width="18.500" height="11.200" rx="1.500" fill="#fff" stroke="#8e8e8e" stroke-width="1"/><text x="832.25" y="277.7" font-size="8.600" fill="#333" text-anchor="middle">305</text>
<rect x="841" y="703" width="7" height="9" rx="1" fill="#fff" stroke="#8e8e8e" stroke-width=".8"/><text x="844.500" y="710.500" font-size="6.500" fill="#333" text-anchor="middle">7</text>
<path d="M703.8 324.4 L709.0 322.6 L715.8 323.2 L719.0 321.8 L723.0 325.6 L721.8 330.4 L731.0 332.5 L743.4 332.8 L743.8 336.2 L756.4 336.0 L776.8 331.8 L797.0 329.0 L816.7 326.6 L816.2 345.0 L816.0 359.8 L825.1 370.4 L817.4 377.4 L810.0 388.0 L804.1 395.6 L798.8 411.0 L795.1 408.6 L776.8 402.6 L751.9 401.8 L750.5 412.0 L749.5 420.6 L737.4 423.0 L727.8 425.4 L720.0 424.0 L711.0 421.8 L707.4 415.8 L699.0 415.8 L693.0 419.0 L689.3 423.0 L688.0 432.0 L686.9 439.8 L677.3 444.6 L671.3 439.8 L665.3 444.6 L666.5 460.0 L667.7 476.2 L653.3 480.7 L651.5 472.0 L650.9 463.9 L654.5 459.1 L646.1 451.9 L643.0 443.0 L641.3 435.0 L632.8 423.0 L625.6 408.6 L626.5 403.0 L624.5 392.0 L625.5 380.0 L628.0 372.0 L640.0 372.5 L653.3 376.1 L668.9 374.9 L670.0 379.7 L682.0 376.0 L684.5 367.7 L694.2 360.5 L697.8 353.3 L700.5 342.0 L702.6 332.8Z" fill="#5a5a46" fill-opacity=".075" stroke="#000" stroke-width="2.500" stroke-linejoin="round"/>
<g fill="none" stroke="#000" stroke-width="2" stroke-linejoin="round" stroke-linecap="round">
<path d="M776.8 331.8 L776.8 345.1 L778.2 357.0 L781.7 358.5 L781.0 371.0 L778.2 380.2 L787.3 381.6 L792.9 386.5 L799.9 385.8 L804.1 395.6"/>
<path d="M781.7 358.5 L762.0 367.5 L753.6 364.0 L747.3 369.0"/>
<path d="M747.3 369.0 L752.2 382.3 L760.6 383.7 L774.0 380.2 L777.5 376.7 L778.2 380.2"/>
<path d="M752.2 382.3 L750.8 402.6"/>
<path d="M735.4 396.3 L750.8 398.4"/>
<path d="M701.5 337.7 L709.2 343.1 L717.0 340.8 L721.6 333.0"/>
<path d="M709.5 343.0 L710.8 357.0 L710.8 371.7"/>
<path d="M686.0 364.0 L696.8 357.8 L710.8 357.0 L723.2 358.6 L737.1 354.7 L743.3 353.9"/>
<path d="M743.8 336.2 L743.3 353.9 L740.2 362.4 L747.9 376.4 L751.0 384.1 L749.5 396.5 L751.0 408.9"/>
<path d="M743.3 353.9 L747.3 369.0"/>
<path d="M723.2 358.6 L727.0 362.4 L732.4 384.1"/>
<path d="M732.4 360.9 L739.4 381.0"/>
<path d="M732.4 384.1 L747.9 376.4"/>
<path d="M710.8 371.7 L723.2 360.9"/>
<path d="M686.0 390.3 L713.9 393.4 L737.0 392.6 L749.5 396.5"/>
<path d="M713.9 393.4 L715.4 405.8"/>
<path d="M715.4 405.8 L729.3 407.3 L732.4 398.0 L749.5 396.5"/>
<path d="M729.3 407.3 L730.9 422.8"/>
<path d="M695.3 407.3 L715.4 405.8"/>
<path d="M709.2 416.6 L724.7 415.1 L730.9 422.8"/>
<path d="M703.8 324.5 L699.0 352.0 L695.3 374.8 L689.0 390.0"/>
<path d="M710.8 371.7 L700.0 380.0 L690.0 388.0"/>
<path d="M710.8 371.7 L716.0 384.0 L713.9 393.4"/>
<path d="M723.0 374.0 L716.0 384.0"/>
<path d="M723.2 360.9 L723.0 374.0 L732.4 384.1"/>
<path d="M700.0 380.0 L704.0 392.0"/>
<path d="M695.3 407.3 L699.0 415.8"/>
<path d="M704.0 406.5 L707.4 415.8"/>
<path d="M684.5 367.7 L688.0 380.0 L683.3 393.0"/>
<path d="M670.0 379.7 L676.0 390.0 L683.3 393.0"/>
<path d="M683.3 393.0 L680.0 404.0 L689.3 423.0"/>
<path d="M683.3 393.0 L672.0 398.0 L668.0 410.0 L671.3 439.8"/>
<path d="M653.3 376.1 L656.0 390.0 L654.0 402.0 L660.0 412.0 L668.0 410.0"/>
<path d="M640.0 372.5 L642.0 392.0 L638.0 404.0 L646.0 420.0 L660.0 412.0"/>
<path d="M625.6 408.6 L638.0 404.0"/>
<path d="M632.8 423.0 L646.0 420.0 L656.0 432.0 L665.3 444.6"/>
<path d="M641.3 435.0 L656.0 432.0"/>
<path d="M656.0 390.0 L676.0 390.0"/>
<path d="M680.0 404.0 L668.0 410.0"/>
<path d="M683.3 393.0 L690.0 400.0 L695.3 407.3"/>
<path d="M683.3 393.0 L686.0 404.0 L693.0 419.0"/>
</g>
<g fill="none" stroke="#000" stroke-width="1.400" stroke-dasharray="2.200 1.500 .8 1.500">
<path d="M756.4 336.0 L756.4 362.6"/>
<path d="M743.8 355.0 L777.5 348.6"/>
<path d="M795.7 329.0 L795.7 345.1"/>
<path d="M778.2 344.4 L813.9 344.4"/>
<path d="M788.7 343.0 L790.1 357.0"/>
<path d="M781.7 357.0 L815.3 359.8"/>
<path d="M795.7 357.0 L798.5 368.3 L797.8 380.9"/>
<path d="M783.8 369.0 L798.5 368.3"/>
<path d="M760.0 383.7 L760.0 400.5"/>
<path d="M769.8 382.3 L769.8 400.5"/>
<path d="M778.2 391.4 L787.3 393.5 L792.9 387.9"/>
<path d="M792.9 387.9 L791.5 404.7"/>
<path d="M752.2 399.8 L776.0 399.8"/>
<path d="M726.0 344.0 L742.0 346.0"/>
<path d="M712.0 338.0 L722.0 352.0"/>
<path d="M704.0 342.0 L716.0 346.0"/>
<path d="M716.0 384.0 L734.0 388.0"/>
<path d="M718.0 398.0 L735.0 400.0"/>
<path d="M708.0 402.0 L720.0 412.0 L727.0 418.0"/>
<path d="M700.0 408.0 L707.0 410.0"/>
<path d="M628.0 392.0 L642.0 392.0"/>
<path d="M630.0 400.0 L654.0 402.0"/>
<path d="M642.0 380.0 L656.0 384.0"/>
<path d="M646.0 420.0 L650.0 436.0 L648.0 450.0"/>
<path d="M656.0 432.0 L660.0 450.0 L656.0 462.0"/>
<path d="M660.0 412.0 L672.0 426.0"/>
<path d="M672.0 398.0 L660.0 400.0"/>
<path d="M676.0 412.0 L686.0 416.0"/>
<path d="M674.0 428.0 L686.0 430.0"/>
<path d="M660.0 446.0 L654.0 459.0"/>
<path d="M690.0 370.0 L700.0 374.0"/>
<path d="M712.0 368.0 L716.0 376.0"/>
<path d="M724.0 372.0 L732.0 376.0"/>
<path d="M740.0 360.0 L744.0 370.0"/>
<path d="M700.0 352.0 L706.0 362.0"/>
</g>
<g stroke="#000" stroke-width="1.700" fill="none" stroke-linecap="round">
<path d="M686.7 392.8L673.2 395.3"/>
<path d="M680.8 393.1L672.4 392.6"/>
<path d="M680.1 391.8L674.4 385.9"/>
<path d="M684.8 390.3L694.3 398.3"/>
<path d="M684.5 393.7L697.9 391.8"/>
<path d="M683.5 390.4L686.1 396.2"/>
<path d="M679.5 392.8L686.0 398.2"/>
<path d="M683.5 393.8L670.8 396.7"/>
<path d="M683.0 391.7L671.7 393.0"/>
<path d="M686.0 394.2L698.3 392.8"/>
<path d="M681.6 390.4L680.4 398.0"/>
<path d="M686.1 392.3L684.2 386.3"/>
<path d="M679.3 391.3L696.3 390.4"/>
<path d="M687.1 392.4L691.5 389.1"/>
<path d="M685.5 391.6L693.4 396.8"/>
<path d="M687.0 394.5L690.4 396.3"/>
<path d="M680.1 390.4L688.8 396.8"/>
<path d="M683.8 392.7L685.3 388.1"/>
<path d="M680.3 393.9L687.8 401.6"/>
<path d="M681.0 391.6L690.1 397.6"/>
<path d="M681.7 395.3L696.1 391.2"/>
<path d="M686.1 393.9L685.5 399.5"/>
<path d="M681.0 391.5L695.3 399.6"/>
<path d="M681.7 390.4L684.5 386.8"/>
<path d="M681.2 393.6L692.4 397.4"/>
<path d="M687.0 392.9L676.7 398.2"/>
<path d="M691.6 405.5l2.1 1.3"/>
<path d="M707.6 403.8l1.8 1.8"/>
<path d="M699.5 408.0l4.0 2.8"/>
<path d="M706.3 396.5l0.6 2.2"/>
<path d="M665.9 408.7l3.0 2.8"/>
<path d="M676.3 404.0l-0.9 2.7"/>
<path d="M672.4 400.5l2.6 0.6"/>
<path d="M690.8 405.0l-1.0 2.7"/>
<path d="M708.0 382.9l2.8 0.1"/>
<path d="M685.4 378.1l2.6 1.6"/>
<path d="M691.5 380.5l2.0 4.2"/>
<path d="M711.1 398.3l-2.1 3.1"/>
<path d="M670.7 377.2l4.7 0.3"/>
<path d="M697.6 408.7l3.9 0.3"/>
<path d="M687.1 400.8l2.7 4.2"/>
<path d="M667.6 394.6l-3.2 3.5"/>
<path d="M699.4 399.9l-3.8 2.9"/>
<path d="M680.9 399.3l-4.4 1.4"/>
<path d="M684.0 402.9l-3.4 1.5"/>
<path d="M694.0 389.0l-1.0 3.7"/>
<path d="M667.8 397.7l-4.6 0.1"/>
<path d="M699.0 389.2l-2.5 2.8"/>
</g>
<ellipse cx="683.300" cy="393" rx="4.500" ry="3.500" fill="#000" opacity=".75"/>
<g fill="#000" font-size="5" font-weight="bold">
<text x="706" y="336">ด.</text>
<text x="716" y="362">ล.</text>
<text x="700" y="392">ร.</text>
<text x="720" y="392">ห.</text>
<text x="694" y="406">ค.</text>
<text x="740" y="386">ส.</text>
<text x="660" y="396">ภ.</text>
<text x="648" y="410">บ.</text>
<text x="672" y="422">จ.</text>
<text x="729" y="414">พ.</text>
<text x="700" y="372">จ.</text>
<text x="760" y="350">ค.</text>
<text x="790" y="340">น.</text>
</g>
<rect x="800.800" y="368.400" width="11.500" height="11" rx="1" fill="#fff" stroke="#999" stroke-width=".9"/><text x="806.500" y="377.500" font-size="7.500" font-weight="bold" fill="#222" text-anchor="middle">ม.</text>
<defs><g id="pin"><path d="M0 13C-2 8-7 4.700-7-.2A7 7 0 0 1 7-.2C7 4.700 2 8 0 13Z" fill="#ee423a"/><circle r="4.900" fill="#fff"/><path d="M0-3.700L3.700-.5H2.800V3H.75V1H-.75V3H-2.800V-.5H-3.700Z" fill="#4f687c"/></g></defs>
<path d="M619.300 374.500C619.300 367 624 363.800 628.500 364C631 362.800 634 363.300 636.500 364.500C638.500 362.600 642 362.600 644 364.200C648 362.800 653.500 364.200 656 368.500C658.500 372 658.600 378 658 383C657.500 389 652 393.500 647.500 400.200C646 397.500 644.500 395.500 643 394.500L640.200 398.500C639 396.500 638 395 637 394C635.500 398 633.500 401.500 631.200 406.200C628.500 400 624.500 395.500 622 390C620 385.500 619.300 380 619.300 374.500Z" fill="#f1453d"/>
<g fill="none" stroke="#fff" stroke-width="1.100" stroke-linecap="round" opacity=".9"><path d="M622 375.500A4.700 4.700 0 0 1 625.500 369"/><path d="M622.800 386A5 5 0 0 1 622.300 379.500"/><path d="M654 377.500A4.700 4.700 0 0 1 656.200 384"/><path d="M631 397l1.200-1.600"/><path d="M637.200 383.600l.8 1.200M640 387l.6.600"/></g>
<path d="M637.600 368.600L640.300 366.200L643 368.600L642.300 370.400H638.300Z" fill="#4f687c" opacity=".85"/>
<use href="#pin" x="632.1" y="374.2"/>
<use href="#pin" x="648" y="372.8"/>
<use href="#pin" x="647.5" y="387.2"/>
<use href="#pin" x="669.9" y="403.6"/>
<use href="#pin" x="676.5" y="208.8"/>
<rect x="776.5" y="104.5" width="28" height="28" fill="#fff" stroke="#196fa6" stroke-width="1"/>
<rect x="812.5" y="104.5" width="54" height="28" fill="#fff" stroke="#196fa6" stroke-width="1"/>
<path d="M839.500 104.500V132.500" stroke="#196fa6" stroke-width="1"/>
<g fill="none" stroke="#196fa6" stroke-width="1.150"><circle cx="789.300" cy="115.300" r="3.700"/><path d="M792 118L796.600 122.400" stroke-linecap="round"/></g>
<g stroke="#196fa6" stroke-width="1.100" fill="none"><path d="M824.800 112.300H832.600M824.800 115.900H832.600M824.800 119.500H832.600M824.800 123.100H832.600"/></g>
<g fill="#196fa6"><rect x="820" y="111.200" width="2.400" height="2.200"/><circle cx="821.200" cy="115.900" r="1.200"/><rect x="820" y="118.400" width="2.400" height="2.200"/><path d="M819.900 124.200l1.300-2.300 1.300 2.300z"/></g>
<g fill="none" stroke="#196fa6" stroke-width="1" stroke-linejoin="round"><path d="M853.200 111l6.800 3.600-6.800 3.600-6.800-3.600z"/><path d="M846.400 117.600l6.800 3.600 6.800-3.600"/><path d="M846.400 120.400l6.800 3.600 6.800-3.600"/></g>
<rect x="838.800" y="638" width="28.400" height="58" fill="#fff"/><path d="M838.500 667.200H867.500" stroke="#e0e0e0" stroke-width="1"/>
<path d="M846.500 652.500H859.500M853 646V659M846.500 681.800H859.500" stroke="#6e6e6e" stroke-width="1.200" fill="none"/>
<rect x="581" y="709" width="301" height="14" fill="#fff" fill-opacity=".82"/>
<text x="585.500" y="718.700" font-size="10.400" fill="#4a4a4a">Esri, CGIAR, USGS | NOSTRA, Esri, Tom…</text><text x="876.500" y="718.700" font-size="10.600" fill="#4a4a4a" text-anchor="end">Powered by Esri</text>
</svg>

</div>

</div>
<div style="position:absolute;left:961px;top:0;width:3px;height:749px;background:#f1f1f1"></div>
<div style="position:absolute;left:963px;top:493px;width:1px;height:226px;background:#c1c1c1"></div>
</body>
</html>
